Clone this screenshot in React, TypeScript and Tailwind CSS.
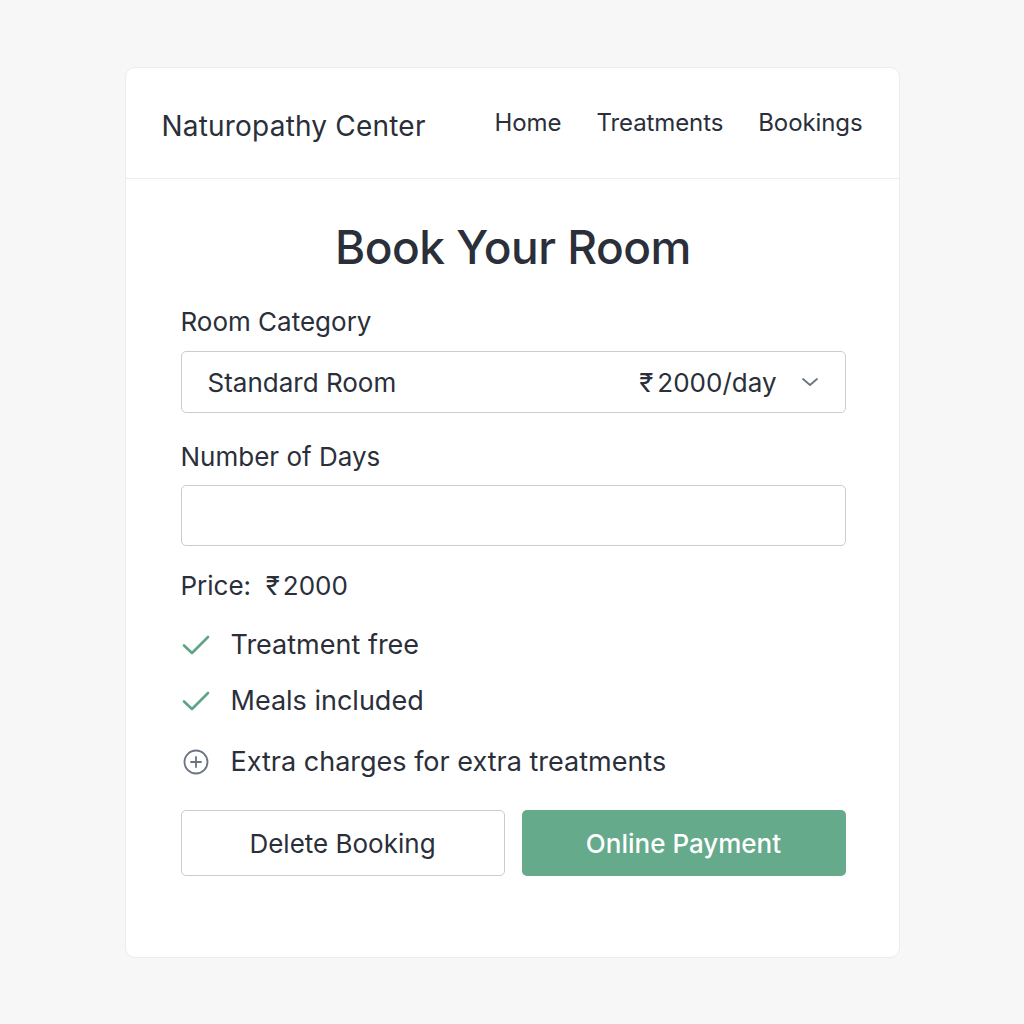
import React from "react";

function Check() {
  return (
    <svg width="30" height="24" viewBox="0 0 30 24" fill="none">
      <path d="M3 12.5 L11 20 L27 4" stroke="#5fa585" strokeWidth="2.6" strokeLinecap="round" strokeLinejoin="round" />
    </svg>
  );
}

function PlusCircle() {
  return (
    <svg width="30" height="28" viewBox="0 0 30 28" fill="none">
      <circle cx="15" cy="14" r="11.5" stroke="#6b7280" strokeWidth="1.8" />
      <path d="M15 9 V19 M10 14 H20" stroke="#6b7280" strokeWidth="1.8" strokeLinecap="round" />
    </svg>
  );
}

export default function App() {
  return (
    <div className="min-h-[1024px] w-full bg-[#f7f7f7] pt-[67px] text-[#2a2f3a]" style={{ fontFamily: "Inter, 'Noto Sans', sans-serif" }}>
      <div className="mx-auto w-[775px] rounded-[10px] border border-[#ececec] bg-white">
        <header className="flex h-[111px] items-center justify-between border-b border-[#ececec] pl-[36px] pr-[36px]">
          <div className="pt-[6px] text-[28px] tracking-[0.2px]">Naturopathy Center</div>
          <nav className="flex gap-[35px] text-[24px] tracking-[-0.1px]">
            <span>Home</span>
            <span>Treatments</span>
            <span>Bookings</span>
          </nav>
        </header>
        <div className="pb-[81px] pl-[55px] pr-[53px]">
          <h1 className="mt-[40px] text-center text-[46px] font-medium leading-[56px] tracking-[-0.5px]">Book Your Room</h1>
          <div className="mt-[31px] text-[26px] leading-[32px]">Room Category</div>
          <div className="mt-[13px] flex h-[62px] items-center justify-between rounded-[5px] border border-[#c9ccd1] pl-[26px] pr-[26px] text-[26px]">
            <span>Standard Room</span>
            <div className="flex items-center gap-[24px]">
              <span><span className="mr-[4px]">₹</span>2000/day</span>
              <svg width="18" height="12" viewBox="0 0 18 12" fill="none">
                <path d="M2 3 L9 9 L16 3" stroke="#6b7280" strokeWidth="1.8" strokeLinecap="round" strokeLinejoin="round" />
              </svg>
            </div>
          </div>
          <div className="mt-[28px] text-[26px] leading-[32px]">Number of Days</div>
          <div className="mt-[12px] h-[61px] rounded-[5px] border border-[#c9ccd1]" />
          <div className="mt-[24px] text-[26px] leading-[32px]">Price:&nbsp; <span className="mr-[3px]">₹</span>2000</div>
          <div className="mt-[27px] flex flex-col gap-[24px] text-[27px]">
            <div className="flex h-[32px] items-center gap-[20px]">
              <Check />
              <span>Treatment free</span>
            </div>
            <div className="flex h-[32px] items-center gap-[20px]">
              <Check />
              <span>Meals included</span>
            </div>
            <div className="mt-[5px] flex h-[32px] items-center gap-[20px]">
              <PlusCircle />
              <span>Extra charges for extra treatments</span>
            </div>
          </div>
          <div className="mt-[32px] grid grid-cols-2 gap-[17px]">
            <button className="h-[66px] rounded-[5px] border border-[#c9ccd1] bg-white text-[26px]">Delete Booking</button>
            <button className="h-[66px] rounded-[5px] bg-[#64aa8b] text-[26px] font-medium text-white">Online Payment</button>
          </div>
        </div>
      </div>
    </div>
  );
}
